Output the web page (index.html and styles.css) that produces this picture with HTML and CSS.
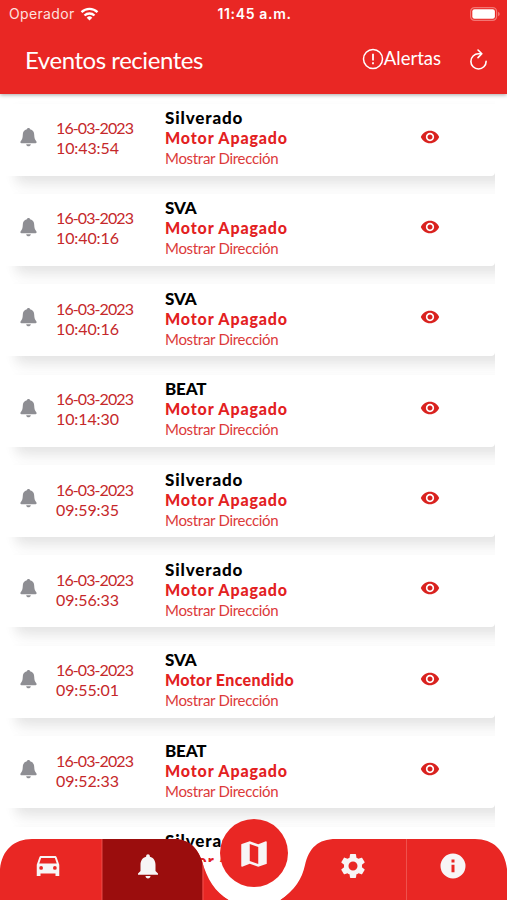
FILE: index.html
```
<!DOCTYPE html>
<html lang="es">
<head>
    <meta charset="UTF-8">
    <meta name="viewport" content="width=device-width, initial-scale=1.0">
    <title>Eventos recientes</title>
    <link rel="stylesheet" href="styles.css">
</head>
<body>
    <!-- Shared icons -->
    <svg class="icon-defs">
        <symbol id="bell" viewBox="0 0 24 24">
            <path d="M12 22c1.100 0 2-.9 2-2h-4c0 1.100.9 2 2 2zm6-6v-5c0-3.070-1.630-5.640-4.500-6.320V4c0-.83-.67-1.500-1.500-1.500s-1.500.67-1.500 1.500v.68C7.640 5.360 6 7.920 6 11v5l-2 2v1h16v-1l-2-2z"/>
        </symbol>
        <symbol id="bell-small" viewBox="0 0 16 18">
            <path d="M8 0C7 0 6.600.6 6.500 1.300C3.800 2 2.600 4 2.600 6.500C2.500 10 1.900 11.200.6 12.600C0 13.400.3 14.400 1.300 14.400H14.700C15.700 14.400 16 13.400 15.400 12.600C14.100 11.200 13.500 10 13.400 6.500C13.400 4 12.200 2 9.500 1.300C9.400.6 9 0 8 0zM5.800 15.400H10.200C9.900 18 6.100 18 5.800 15.400z"/>
        </symbol>
        <symbol id="eye" viewBox="0 0 24 24">
            <path d="M12 4.500C7 4.500 2.730 7.610 1 12c1.730 4.390 6 7.500 11 7.500s9.270-3.110 11-7.500c-1.730-4.390-6-7.500-11-7.500zM12 17c-2.760 0-5-2.240-5-5s2.240-5 5-5 5 2.240 5 5-2.240 5-5 5zm0-8c-1.660 0-3 1.340-3 3s1.340 3 3 3 3-1.340 3-3-1.340-3-3-3z"/>
        </symbol>
    </svg>

    <header class="header">
        <div class="status-bar">
            <div class="carrier">
                <span>Operador</span>
                <svg class="wifi" viewBox="0 0 18 14" fill="none" stroke="#fff" stroke-width="2.300">
                    <path d="M1 5.200a11.500 11.500 0 0 1 16 0M4 8.500a7.200 7.200 0 0 1 10 0"/>
                    <path d="M9 13.500L6.200 10.700a4 4 0 0 1 5.600 0z" fill="#fff" stroke="none"/>
                </svg>
            </div>
            <span class="clock">11:45 a.m.</span>
            <svg class="battery" viewBox="0 0 30 14">
                <rect x="0.600" y="0.600" width="26" height="12.800" rx="4" fill="none" stroke="#f37673" stroke-width="1.200"/>
                <rect x="2.300" y="2.300" width="22.600" height="9.400" rx="2.200" fill="#fff"/>
                <path d="M28 4.800c2.300.8 2.300 3.600 0 4.400z" fill="#f37673"/>
            </svg>
        </div>
        <div class="title-bar">
            <h1>Eventos recientes</h1>
            <a class="alerts" href="#">
                <svg viewBox="0 0 22 22" fill="none" stroke="#fff" stroke-width="1.500">
                    <circle cx="11" cy="11" r="9.500"/>
                    <path d="M11 5.800v6.700M11 14.300v2" stroke-width="1.800"/>
                </svg>
                <span>Alertas</span>
            </a>
            <svg class="refresh" viewBox="0 0 20 22" fill="none" stroke="#fff" stroke-width="1.700" stroke-linecap="round" stroke-linejoin="round">
                <path d="M13 5H10a8 8 0 1 0 8 8M9.500 1l4 4-4 4"/>
            </svg>
        </div>
    </header>

    <main class="events">
        <div class="event">
            <svg class="event-bell"><use href="#bell-small"/></svg>
            <div class="event-date">16-03-2023<br><span>10:43:54</span></div>
            <div class="event-info"><h2>Silverado</h2><p class="off">Motor Apagado</p><a>Mostrar Dirección</a></div>
            <svg class="event-eye"><use href="#eye"/></svg>
        </div>
        <div class="event">
            <svg class="event-bell"><use href="#bell-small"/></svg>
            <div class="event-date">16-03-2023<br><span>10:40:16</span></div>
            <div class="event-info"><h2 class="caps">SVA</h2><p class="off">Motor Apagado</p><a>Mostrar Dirección</a></div>
            <svg class="event-eye"><use href="#eye"/></svg>
        </div>
        <div class="event">
            <svg class="event-bell"><use href="#bell-small"/></svg>
            <div class="event-date">16-03-2023<br><span>10:40:16</span></div>
            <div class="event-info"><h2 class="caps">SVA</h2><p class="off">Motor Apagado</p><a>Mostrar Dirección</a></div>
            <svg class="event-eye"><use href="#eye"/></svg>
        </div>
        <div class="event">
            <svg class="event-bell"><use href="#bell-small"/></svg>
            <div class="event-date">16-03-2023<br><span>10:14:30</span></div>
            <div class="event-info"><h2 class="caps">BEAT</h2><p class="off">Motor Apagado</p><a>Mostrar Dirección</a></div>
            <svg class="event-eye"><use href="#eye"/></svg>
        </div>
        <div class="event">
            <svg class="event-bell"><use href="#bell-small"/></svg>
            <div class="event-date">16-03-2023<br><span>09:59:35</span></div>
            <div class="event-info"><h2>Silverado</h2><p class="off">Motor Apagado</p><a>Mostrar Dirección</a></div>
            <svg class="event-eye"><use href="#eye"/></svg>
        </div>
        <div class="event">
            <svg class="event-bell"><use href="#bell-small"/></svg>
            <div class="event-date">16-03-2023<br><span>09:56:33</span></div>
            <div class="event-info"><h2>Silverado</h2><p class="off">Motor Apagado</p><a>Mostrar Dirección</a></div>
            <svg class="event-eye"><use href="#eye"/></svg>
        </div>
        <div class="event">
            <svg class="event-bell"><use href="#bell-small"/></svg>
            <div class="event-date">16-03-2023<br><span>09:55:01</span></div>
            <div class="event-info"><h2 class="caps">SVA</h2><p class="on">Motor Encendido</p><a>Mostrar Dirección</a></div>
            <svg class="event-eye"><use href="#eye"/></svg>
        </div>
        <div class="event">
            <svg class="event-bell"><use href="#bell-small"/></svg>
            <div class="event-date">16-03-2023<br><span>09:52:33</span></div>
            <div class="event-info"><h2 class="caps">BEAT</h2><p class="off">Motor Apagado</p><a>Mostrar Dirección</a></div>
            <svg class="event-eye"><use href="#eye"/></svg>
        </div>
        <div class="event event-last">
            <svg class="event-bell"></svg>
            <div class="event-date"></div>
            <div class="event-info"><h2>Silverado</h2><p class="off">Motor Apagado</p></div>
        </div>
    </main>

    <nav class="tabs">
        <!-- Bar shape with the cut-out for the map button -->
        <svg class="tabs-shape" viewBox="0 0 507 82">
            <clipPath id="bar">
                <path d="M0 82V51C2 32 14 21 32 21H172C189 21 197 29 202 43C207 61 215 74 229 82H280C295 72 302 61 305 47C309 30 318 21 336 21H475C493 21 505 32 507 51V82z"/>
            </clipPath>
            <g clip-path="url(#bar)">
                <path d="M0 0H507V82H0z" fill="#e92724"/>
                <path d="M102 0H202.500V82H102z" fill="#9b0d0d"/>
                <path d="M102 0V82M203 0V82M406.500 0V82" stroke="#f05c58" stroke-width="0.800"/>
            </g>
            <path d="M203 44C208 61 216 74 229 82H280C293 73 301 61 304 48V44z" fill="#fff"/>
        </svg>
        <a class="tab" href="#">
            <svg viewBox="0 0 24 24"><path d="M18.920 5.010C18.720 4.420 18.160 4 17.500 4h-11c-.66 0-1.210.42-1.420 1.010L3 11v9h3v-2h12v2h3v-9l-2.080-5.990zM6.500 15a1.500 1.500 0 1 1 0-3 1.500 1.500 0 0 1 0 3zm11 0a1.500 1.500 0 1 1 0-3 1.500 1.500 0 0 1 0 3zM5 10l1.500-4.500h11L19 10H5z"/></svg>
        </a>
        <a class="tab" href="#"><svg><use href="#bell"/></svg></a>
        <a class="tab tab-map" href="#">
            <svg viewBox="0 0 24 24"><path d="M20.500 3l-.16.030L15 5.100 9 3 3.360 4.900c-.21.070-.36.250-.36.480V20.500c0 .28.220.5.500.5l.16-.03L9 18.900l6 2.100 5.640-1.900c.21-.07.36-.25.36-.48V3.500c0-.28-.22-.5-.5-.5zM15 19l-6-2.110V5l6 2.110V19z"/></svg>
        </a>
        <a class="tab tab-gear" href="#">
            <svg viewBox="0 0 24 24"><path d="M19.140 12.940c.04-.3.060-.61.060-.94 0-.32-.02-.64-.07-.94l2.030-1.580c.18-.14.23-.41.120-.61l-1.920-3.320c-.12-.22-.37-.29-.59-.22l-2.390.96c-.5-.38-1.030-.7-1.620-.94L14.400 2.810c-.04-.24-.24-.41-.48-.41h-3.840c-.24 0-.43.17-.47.410L9.250 5.350c-.59.240-1.130.570-1.620.940L5.240 5.330c-.22-.08-.47 0-.59.220L2.740 8.870c-.12.210-.08.470.120.610l2.030 1.580c-.05.3-.09.630-.09.940s.02.640.07.940l-2.030 1.580c-.18.140-.23.410-.12.610l1.920 3.320c.12.220.37.290.59.220l2.390-.96c.5.380 1.030.7 1.620.94l.36 2.540c.05.240.24.410.48.410h3.840c.24 0 .44-.17.470-.41l.36-2.540c.59-.24 1.130-.56 1.620-.94l2.390.96c.22.080.47 0 .59-.22l1.920-3.320c.12-.22.070-.47-.12-.61l-2.010-1.580zM12 15.600a3.600 3.600 0 1 1 0-7.200 3.600 3.600 0 0 1 0 7.200z"/></svg>
        </a>
        <a class="tab tab-info" href="#">
            <svg viewBox="0 0 24 24"><path d="M12 2a10 10 0 1 0 0 20 10 10 0 0 0 0-20zm1.200 15h-2.400v-6h2.400v6zm0-7.800h-2.400V6.800h2.400v2.400z"/></svg>
        </a>
    </nav>
</body>
</html>
```
FILE: styles.css
```
* {
    box-sizing: border-box;
}
body {
    margin: 0;
    height: 900px;
    overflow: hidden;
    display: flex;
    flex-direction: column;
    background-color: #fff;
    font-family: Lato, "Open Sans", sans-serif;
}
h1, h2, p {
    margin: 0;
}
a {
    text-decoration: none;
    color: inherit;
}
.icon-defs {
    display: none;
}

/* Header */
.header {
    flex: none;
    height: 93.500px;
    background-color: #e92724;
    color: #fff;
    box-shadow: 0 1px 4px rgba(0, 0, 0, 0.350);
    z-index: 1;
}
.status-bar {
    display: grid;
    grid-template-columns: 1fr auto 1fr;
    align-items: center;
    height: 27px;
    padding: 0 7px 0 9px;
    font-family: Inter, sans-serif;
    font-size: 14px;
}
.carrier {
    display: flex;
    align-items: center;
    gap: 5px;
    letter-spacing: 0.350px;
    color: #fde0df;
}
.wifi {
    width: 19px;
    height: 14px;
}
.clock {
    font-weight: 600;
    letter-spacing: 0.650px;
}
.battery {
    width: 30px;
    height: 14px;
    justify-self: end;
}
.title-bar {
    display: flex;
    align-items: center;
    height: 64px;
    padding: 0 19px 0 25px;
}
.title-bar h1 {
    flex: 1;
    font-size: 24px;
    font-weight: 400;
    letter-spacing: -0.450px;
}
.alerts {
    display: flex;
    align-items: center;
    font-size: 18.500px;
    margin: -2px 28px 0 0;
}
.alerts svg {
    width: 22px;
    height: 22px;
    margin-top: 2px;
}
.refresh {
    width: 19px;
    height: 21px;
}

/* Event list */
.events {
    flex: none;
    width: 494.500px;
    height: 768.500px;
    padding-top: 10px;
    overflow: hidden;
}
.event {
    display: flex;
    align-items: center;
    height: 72px;
    margin-bottom: 18.400px;
    padding-left: 20px;
    background-color: #fff;
    border-radius: 0 0 4px 0;
    box-shadow: 15px 6px 12px rgba(0, 0, 0, 0.080), 18px 14px 16px rgba(0, 0, 0, 0.035);
}
.event-bell {
    width: 17px;
    height: 19px;
    margin: -5px 19px 0 0;
    fill: #8e8e93;
}
.event-date {
    width: 109px;
    margin-top: -3px;
    color: #c5282a;
    font-size: 16px;
    line-height: 20px;
    letter-spacing: -0.900px;
}
.event-date span {
    letter-spacing: -0.100px;
}
.event-info {
    width: 255px;
    margin-top: -3px;
    line-height: 20px;
}
.event-info h2 {
    font-size: 17px;
    font-weight: 900;
    line-height: 20px;
    letter-spacing: 0.850px;
    color: #000;
}
.event-info h2.caps {
    letter-spacing: -0.200px;
}
.event-info p {
    font-size: 16px;
    font-weight: 900;
    color: #e3211f;
}
.event-info .off {
    letter-spacing: 0.850px;
}
.event-info .on {
    letter-spacing: 0.350px;
}
.event-info a {
    display: block;
    font-size: 15px;
    letter-spacing: -0.300px;
    color: #dc3a3a;
}
.event-last {
    padding-bottom: 20px;
}
.event-eye {
    width: 20px;
    height: 20px;
    margin-top: -6px;
    fill: #d9221f;
}

/* Bottom tabs */
.tabs {
    position: fixed;
    left: 0;
    bottom: 0;
    display: flex;
    width: 507px;
    height: 82px;
}
.tabs-shape {
    position: absolute;
    width: 507px;
    height: 82px;
}
.tab {
    position: relative;
    width: 101px;
    padding-top: 33px;
    text-align: center;
}
.tab:nth-of-type(1) {
    width: 95px;
}
.tab:nth-of-type(2) {
    width: 105px;
}
.tab svg {
    width: 30px;
    height: 30px;
    fill: #f7f5f6;
}
.tab-map {
    width: 68px;
    height: 68px;
    margin: 1px 14px 0 20px;
    padding-top: 18px;
    border-radius: 50%;
    background-color: #e92724;
}
.tab-map svg {
    width: 34px;
    height: 34px;
}
.tab-info {
    width: 99px;
}
```
